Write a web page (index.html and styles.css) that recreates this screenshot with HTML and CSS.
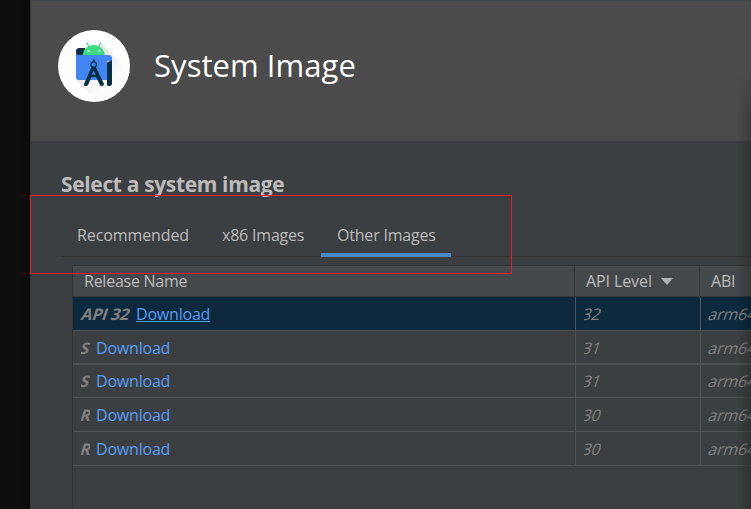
FILE: index.html
```html
<!DOCTYPE html>
<html lang="en">
<head>
<meta charset="utf-8">
<title>System Image</title>
<link rel="stylesheet" href="styles.css">
</head>
<body>
<main class="window">
  <header class="banner">
    <svg class="logo" viewBox="0 0 72 72" width="72" height="72">
      <defs>
        <linearGradient id="shade" gradientUnits="userSpaceOnUse" x1="30" y1="30" x2="52" y2="52">
          <stop offset="0" stop-color="#e2e2e2"/>
          <stop offset="1" stop-color="#fcfcfc"/>
        </linearGradient>
        <clipPath id="disc"><circle cx="36" cy="36" r="36"/></clipPath>
      </defs>
      <circle cx="36" cy="36" r="36" fill="#fff"/>
      <path d="M43 13 L72 42 L72 72 L40 72 L18 50 L43 20Z" fill="url(#shade)" clip-path="url(#disc)"/>
      <path d="M27 18 H21.500 C19 18 18 19.500 18 21.500 V26 H27Z" fill="#073042"/>
      <path d="M29 13 L31 17 M42.500 13 L40.500 17" stroke="#3ddc84" stroke-width="1.300" fill="none" stroke-linecap="round"/>
      <path d="M24.500 26 C25.500 18.500 30 15 35.700 15 S46 18.500 47 26Z" fill="#3ddc84"/>
      <circle cx="30.500" cy="21" r=".9" fill="#fff"/><circle cx="41" cy="21" r=".9" fill="#fff"/>
      <path d="M18 22 C18 24 19 25 21 25 H50.500 C53 25 54 26.500 54 28.500 V31 H49 V50 H21 C19 50 18 49 18 47Z" fill="#4285f4"/>
      <path d="M54 29 C54 31 52 31 49 32.500 V54.500 Q49 56 50.500 56 H51.500 Q54 56 54 53.500 V29Z" fill="#073042"/>
      <path d="M34 36 H37.400 L46 54 Q46 56 43.800 56 Q42.500 56 42 55 L38 47 H33.500 L30 55 Q29.500 56 28 56 Q25.500 56 26 54Z M35.700 40.500 L33.800 45 Q35.700 43.800 37.600 45Z" fill="#073042" fill-rule="evenodd"/>
      <path d="M35.700 29 V32" stroke="#073042" stroke-width="1.500"/>
      <circle cx="35.700" cy="34.500" r="2.700" fill="#4285f4" stroke="#073042" stroke-width="1.300"/>
    </svg>
    <h1>System Image</h1>
  </header>
  <section class="content">
    <h2>Select a system image</h2>
    <nav class="tabs">
      <span class="tab tab-first">Recommended</span>
      <span class="tab tab-x86">x86 Images</span>
      <span class="tab tab-active">Other Images</span>
    </nav>
    <div class="table">
      <div class="row head"><span>Release Name</span><span>API Level<i class="sort"></i></span><span>ABI</span></div>
      <div class="row selected"><span><b><i>API 32</i></b><a>Download</a></span><span><em><i>32</i></em></span><span class="abi"><i>arm64</i></span></div>
      <div class="row thick"><span><b class="short"><i>S</i></b><a>Download</a></span><span><em><i>31</i></em></span><span class="abi"><i>arm64</i></span></div>
      <div class="row third"><span><b class="short"><i>S</i></b><a>Download</a></span><span><em><i>31</i></em></span><span class="abi"><i>arm64</i></span></div>
      <div class="row"><span><b class="short"><i>R</i></b><a>Download</a></span><span><em><i>30</i></em></span><span class="abi"><i>arm64</i></span></div>
      <div class="row"><span><b class="short"><i>R</i></b><a>Download</a></span><span><em><i>30</i></em></span><span class="abi"><i>arm64</i></span></div>
    </div>
  </section>
</main>
<div class="edge-shadow"></div>
<div class="marker"></div>
</body>
</html>
```
FILE: styles.css
```css
* { box-sizing: border-box; }
body {
  margin: 0;
  width: 751px;
  height: 509px;
  overflow: hidden;
  position: relative;
  background: linear-gradient(90deg, #0e0e0e 20px, #0a0a0a 30px);
  color: #bbb;
  font: 16px/22px "Open Sans", "Noto Sans", sans-serif;
  letter-spacing: -0.2px;
}
.window {
  margin-left: 30px;
  height: 509px;
  display: flex;
  flex-direction: column;
  background: #3c3f41;
  border-left: 1px solid #333537;
  border-top: 1px solid #3e4347;
}
.banner {
  height: 140px;
  flex: none;
  display: flex;
  padding: 28.5px 0 0 27px;
  background: #4b4b4b;
}
.logo { flex: none; }
h1 {
  margin: 13.5px 0 0 24px;
  font-size: 31px;
  line-height: 44px;
  font-weight: 400;
  letter-spacing: 0.05px;
  color: #fff;
  white-space: nowrap;
}
.content {
  flex: 1;
  min-height: 0;
  padding: 28px 0 0 30px;
  display: flex;
  flex-direction: column;
}
h2 {
  margin: 0;
  height: 31px;
  font-size: 21px;
  line-height: 30px;
  font-weight: 700;
  letter-spacing: -0.35px;
  white-space: nowrap;
}
.tabs {
  height: 57px;
  flex: none;
  display: flex;
  padding-top: 16px;
  border-bottom: 1px solid #323232;
}
.tab {
  height: 41px;
  padding: 8px 0 0 16px;
  white-space: nowrap;
}
.tab-first { width: 145px; letter-spacing: -0.1px; }
.tab-x86 { width: 115px; }
.tab-active { width: 130px; border-bottom: 4px solid #4a88c7; }
.table {
  flex: 1;
  margin: 8px 0 0 11px;
  border-left: 1px solid #323232;
  border-top: 1px solid #323232;
}
.row {
  display: grid;
  grid-template-columns: 503px 125px 50px;
  height: 34px;
  border-bottom: 1px solid #505355;
  line-height: 22px;
}
.row > span {
  padding: 6px 0 0 8px;
  border-right: 1px solid #505355;
  white-space: nowrap;
  overflow: hidden;
}
.row > span:last-child { border-right: 0; padding-left: 8px; }
.row.head {
  height: 31px;
  grid-template-columns: 502px 125px 51px;
  background: #45484a;
  border-color: #323436;
}
.row.head > span { padding: 4px 0 0 11px; border-color: #353739; }
.row.head > span:last-child { padding-left: 11px; }
.row.head > span:first-child { letter-spacing: -0.25px; }
.row.head > span:nth-child(2) { letter-spacing: -0.1px; }
.row.selected { background: #0d293e; }
.row.thick { border-bottom-width: 2px; }
.row.third { height: 33px; }
.row.third > span { padding-top: 5px; }
.sort {
  display: inline-block;
  margin-left: 9px;
  vertical-align: 2px;
  border: solid transparent;
  border-width: 7px 6px 0;
  border-top-color: #b0b2b4;
}
b, em, .abi { color: #808080; font-style: normal; }
b i, em i, .abi i {
  display: inline-block;
  font-style: normal;
  transform: skewX(-18deg);
}
b { display: inline-block; width: 55px; vertical-align: top; }
b i { letter-spacing: -0.2px; margin-left: 1px; }
.short { width: 9px; margin-right: 6px; overflow: hidden; }
.short i { margin-left: 0; }
a { display: inline-block; color: #589df6; }
.selected a { text-decoration: underline; }
em { display: inline-block; width: 17px; overflow: hidden; vertical-align: top; }
em i { margin-left: -1px; }
.edge-shadow {
  position: absolute;
  right: 0;
  top: 72px;
  width: 14px;
  height: 437px;
  background: linear-gradient(90deg, transparent, rgba(0,0,0,.2));
  -webkit-mask-image: linear-gradient(transparent, #000 40px);
  mask-image: linear-gradient(transparent, #000 40px);
}
.marker {
  position: absolute;
  left: 30px;
  top: 195px;
  width: 482px;
  height: 79px;
  border: 1px solid #ec1c24;
}
```
